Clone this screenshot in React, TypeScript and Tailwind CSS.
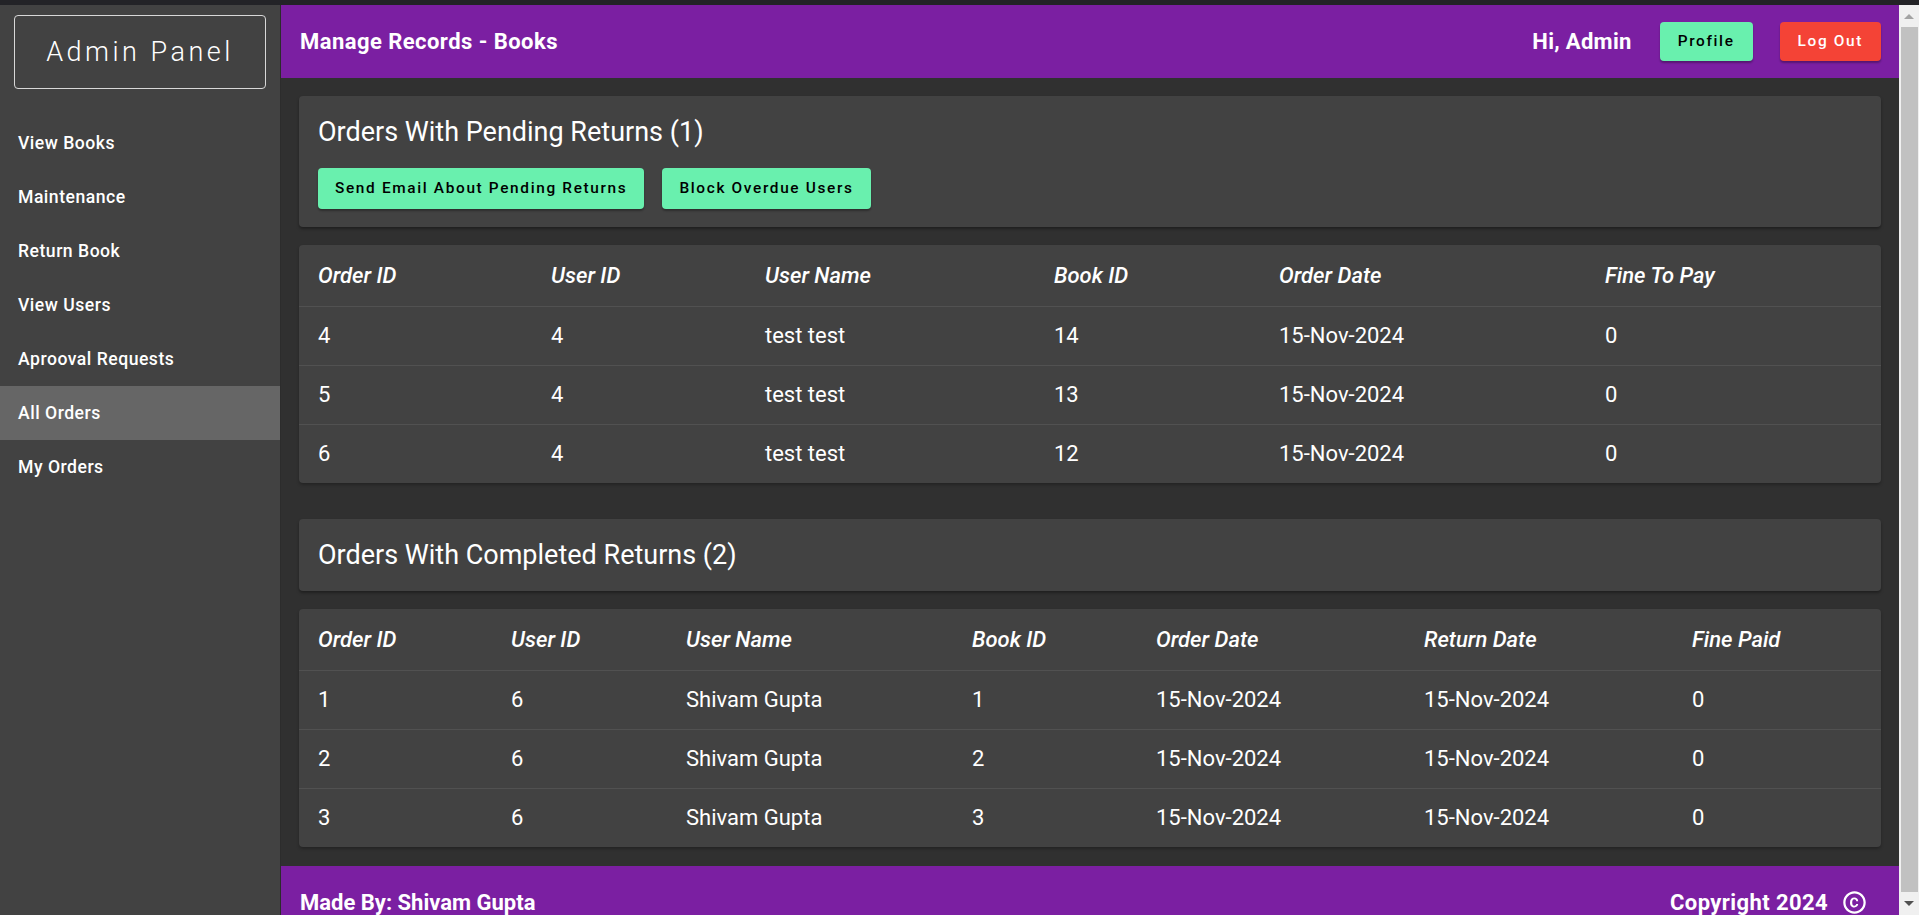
import clsx from 'clsx';

const navItems = [
  'View Books',
  'Maintenance',
  'Return Book',
  'View Users',
  'Aprooval Requests',
  'All Orders',
  'My Orders',
];

const pendingCols = ['Order ID', 'User ID', 'User Name', 'Book ID', 'Order Date', 'Fine To Pay'];
const pendingRows = [
  ['4', '4', 'test test', '14', '15-Nov-2024', '0'],
  ['5', '4', 'test test', '13', '15-Nov-2024', '0'],
  ['6', '4', 'test test', '12', '15-Nov-2024', '0'],
];

const completedCols = ['Order ID', 'User ID', 'User Name', 'Book ID', 'Order Date', 'Return Date', 'Fine Paid'];
const completedRows = [
  ['1', '6', 'Shivam Gupta', '1', '15-Nov-2024', '15-Nov-2024', '0'],
  ['2', '6', 'Shivam Gupta', '2', '15-Nov-2024', '15-Nov-2024', '0'],
  ['3', '6', 'Shivam Gupta', '3', '15-Nov-2024', '15-Nov-2024', '0'],
];

function DataTable({ cols, rows, grid }: { cols: string[]; rows: string[][]; grid: string }) {
  return (
    <div className="bg-[#424242] rounded-[4px] shadow-[0_2px_3px_rgba(0,0,0,0.25)] text-white">
      <div className={clsx('grid h-[62px] items-center border-b border-[#515151]', grid)}>
        {cols.map((c) => (
          <div key={c} className="pl-[19px] text-[22px] italic font-medium">
            {c}
          </div>
        ))}
      </div>
      {rows.map((r, i) => (
        <div
          key={i}
          className={clsx(
            'grid items-center text-[22px]',
            grid,
            i < rows.length - 1 ? 'h-[59px] border-b border-[#515151]' : 'h-[58px]'
          )}
        >
          {r.map((v, j) => (
            <div key={j} className="pl-[19px]">
              {v}
            </div>
          ))}
        </div>
      ))}
    </div>
  );
}

function GreenButton({ children }: { children: React.ReactNode }) {
  return (
    <button className="bg-[#69f0ae] text-black text-[15.4px] font-medium tracking-[1.65px] leading-[1.75] px-[17px] py-[7px] rounded-[4px] shadow-[0_2px_2px_rgba(0,0,0,0.3)]">
      {children}
    </button>
  );
}

export default function App() {
  return (
    <div className="w-[1919px] h-[915px] overflow-hidden flex flex-col font-['Roboto',sans-serif] bg-[#303030]">
      <div className="h-[5px] bg-[#232327] shrink-0" />
      <div className="flex flex-1 min-h-0">
        {/* Sidebar */}
        <aside className="w-[281px] shrink-0 bg-[#424242] border-r border-[#2c2c2c] flex flex-col">
          <div className="mx-[14px] mt-[10px] h-[74px] border border-[#d8d8d8] rounded-[4px] flex items-center justify-center">
            <span className="text-white text-[27px] font-light tracking-[3.5px]">Admin Panel</span>
          </div>
          <nav className="mt-[27px] flex flex-col">
            {navItems.map((item) => (
              <div
                key={item}
                className={clsx(
                  'h-[54px] flex items-center px-[18px] text-white text-[17.6px] font-medium tracking-[0.5px]',
                  item === 'All Orders' && 'bg-[#666666]'
                )}
              >
                {item}
              </div>
            ))}
          </nav>
        </aside>

        {/* Main */}
        <main className="flex-1 flex flex-col min-w-0">
          <header className="h-[73px] shrink-0 bg-[#7b1fa2] flex items-center justify-between pl-[19px] pr-[18px] text-white">
            <h1 className="text-[22px] font-bold tracking-[0.45px]">Manage Records - Books</h1>
            <div className="flex items-center">
              <span className="text-[22px] font-bold tracking-[0.3px] mr-[28px]">Hi, Admin</span>
              <button className="bg-[#69f0ae] text-black text-[15.4px] font-medium tracking-[1.65px] leading-[1.75] px-[18px] py-[6.5px] rounded-[4px] shadow-[0_2px_2px_rgba(0,0,0,0.3)]">
                Profile
              </button>
              <button className="ml-[27px] bg-[#f44336] text-white text-[15.4px] font-medium tracking-[1.65px] leading-[1.75] px-[18px] py-[6.5px] rounded-[4px] shadow-[0_2px_2px_rgba(0,0,0,0.3)]">
                Log Out
              </button>
            </div>
          </header>

          <div className="px-[18px] pt-[18px] flex flex-col">
            <section className="bg-[#424242] rounded-[4px] shadow-[0_2px_3px_rgba(0,0,0,0.35)] px-[19px] pt-[20px] pb-[18px] text-white">
              <h2 className="text-[27px] leading-[32px]">Orders With Pending Returns (1)</h2>
              <div className="flex gap-[18px] mt-[20px]">
                <GreenButton>Send Email About Pending Returns</GreenButton>
                <GreenButton>Block Overdue Users</GreenButton>
              </div>
            </section>

            <div className="mt-[18px]">
              <DataTable cols={pendingCols} rows={pendingRows} grid="grid-cols-[233px_214px_289px_225px_326px_1fr]" />
            </div>

            <section className="mt-[36px] h-[72px] bg-[#424242] rounded-[4px] shadow-[0_2px_3px_rgba(0,0,0,0.35)] px-[19px] flex items-center text-white">
              <h2 className="text-[27px] leading-[32px]">Orders With Completed Returns (2)</h2>
            </section>

            <div className="mt-[18px]">
              <DataTable
                cols={completedCols}
                rows={completedRows}
                grid="grid-cols-[193px_175px_286px_184px_268px_268px_1fr]"
              />
            </div>
          </div>

          <footer className="mt-[19px] h-[73px] shrink-0 bg-[#7b1fa2] flex items-center justify-between pl-[19px] pr-[31px] text-white">
            <span className="text-[22px] font-bold">Made By: Shivam Gupta</span>
            <div className="flex items-center gap-[13px]">
              <span className="text-[22px] font-bold tracking-[0.4px]">Copyright 2024</span>
              <svg viewBox="0 0 24 24" className="w-[27px] h-[27px] fill-white">
                <path d="M11.88 9.14c1.28.06 1.61 1.15 1.63 1.66h1.79c-.08-1.980-1.49-3.19-3.45-3.19C9.64 7.61 8 9 8 12.14c0 1.94.93 4.24 3.84 4.24 2.22 0 3.41-1.65 3.44-2.95h-1.790c-.03.59-.45 1.38-1.63 1.44-1.31-.04-1.86-1.06-1.86-2.73 0-2.89 1.28-2.980 1.88-3zM12 2C6.48 2 2 6.48 2 12s4.48 10 10 10 10-4.48 10-10S17.52 2 12 2zm0 18c-4.41 0-8-3.59-8-8s3.59-8 8-8 8 3.59 8 8-3.59 8-8 8z" />
              </svg>
            </div>
          </footer>
        </main>

        {/* Scrollbar */}
        <div className="w-[20px] shrink-0 bg-[#f0f0f0] flex flex-col items-center">
          <div className="h-[22px] flex items-center justify-center">
            <div className="w-0 h-0 border-l-[5px] border-r-[5px] border-b-[5px] border-l-transparent border-r-transparent border-b-[#a3a3a3]" />
          </div>
          <div className="w-[17px] ml-[1px] flex-1 bg-[#c1c1c1]" />
          <div className="h-[23px] flex items-center justify-center">
            <div className="w-0 h-0 border-l-[5px] border-r-[5px] border-t-[5px] border-l-transparent border-r-transparent border-t-[#505050]" />
          </div>
        </div>
      </div>
    </div>
  );
}
